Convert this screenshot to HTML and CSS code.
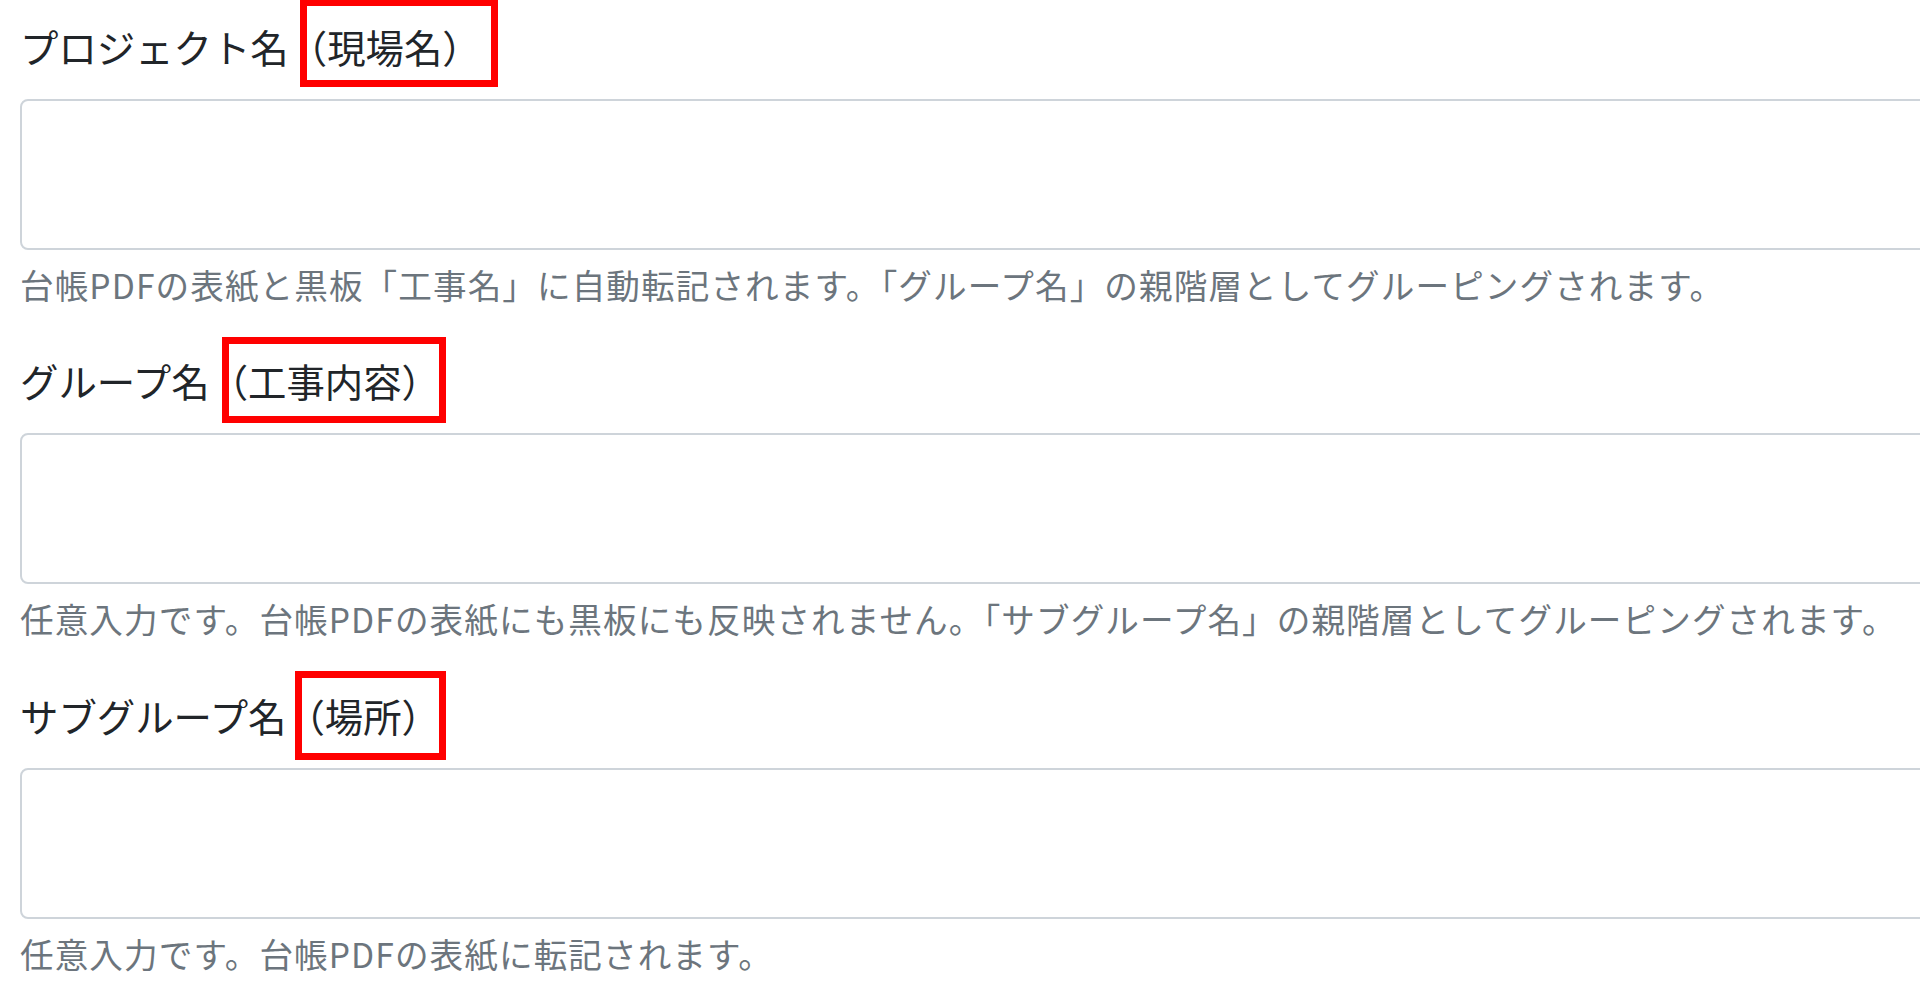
FILE: index.html
```html
<!DOCTYPE html>
<html lang="ja">
<head>
    <meta charset="UTF-8">
    <title>プロジェクト設定</title>
    <link rel="stylesheet" href="styles.css">
</head>
<body>
<form class="form">
    <div class="form-group">
        <label class="form-label" for="project">プロジェクト名<span class="mark mark-project">（現場名）</span></label>
        <textarea class="form-control" id="project"></textarea>
        <p class="form-text">台帳PDFの表紙と黒板「工事名」に自動転記されます。「グループ名」の親階層としてグルーピングされます。</p>
    </div>
    <div class="form-group">
        <label class="form-label" for="group">グループ名<span class="mark mark-group">（工事内容）</span></label>
        <textarea class="form-control" id="group"></textarea>
        <p class="form-text">任意入力です。台帳PDFの表紙にも黒板にも反映されません。「サブグループ名」の親階層としてグルーピングされます。</p>
    </div>
    <div class="form-group">
        <label class="form-label" for="subgroup">サブグループ名<span class="mark mark-place">（場所）</span></label>
        <textarea class="form-control" id="subgroup"></textarea>
        <p class="form-text">任意入力です。台帳PDFの表紙に転記されます。</p>
    </div>
</form>
</body>
</html>
```

FILE: styles.css
```css
*{
    margin:0;
    padding:0;
    box-sizing:border-box;
}
html{
    overflow:hidden;
}
body{
    padding:18px 0 0 20px;
    font-family:"Noto Sans CJK JP","Noto Sans",sans-serif;
    color:#212529;
    background-color:#fff;
}
.form-group{
    margin-bottom:42px;
}
.form-label{
    display:block;
    margin-bottom:23.4px;
    font-size:38.4px;
    line-height:1.5;
}
.form-control{
    display:block;
    width:calc(100% + 40px);
    height:151px;
    border:2px solid #ced4da;
    border-radius:8px;
    resize:none;
    font:inherit;
    background-color:#fff;
}
.form-text{
    margin-top:10px;
    font-size:33.6px;
    line-height:1.5;
    letter-spacing:1.1px;
    color:#6c757d;
}

/* 赤枠の注釈 */
.mark{
    position:relative;
}
.mark:after{
    content:'';
    position:absolute;
    top:-16px;
    bottom:-16px;
    left:10px;
    right:-6px;
    border:7px solid #f00;
}
.mark-project:after{
    top:-19px;
    bottom:-13px;
    left:11px;
    right:-17px;
}
.mark-group:after{
    top:-15px;
    bottom:-15px;
    left:12px;
}
.mark-place:after{
    bottom:-17px;
    left:9px;
}
```
